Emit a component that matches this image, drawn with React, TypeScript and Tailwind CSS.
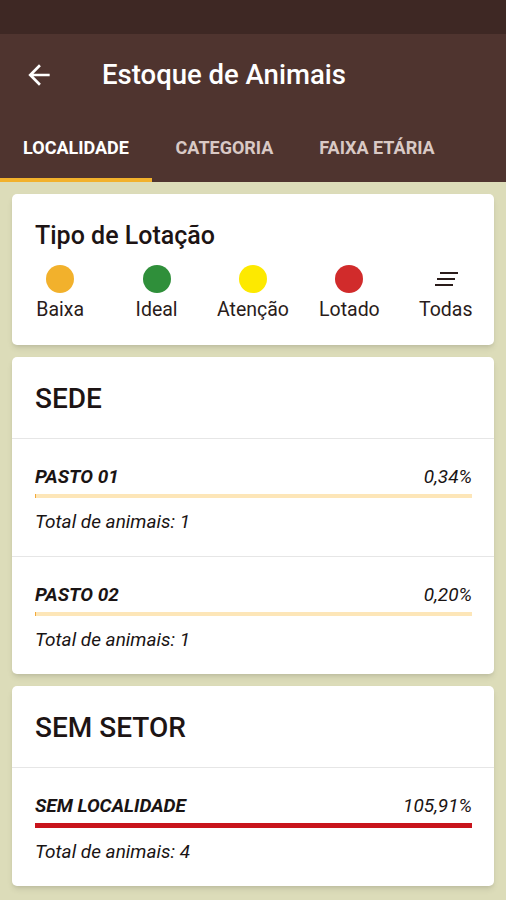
import React from 'react';

const font = { fontFamily: 'Roboto, "Liberation Sans", sans-serif' };

const levels = [
  { label: 'Baixa', color: 'bg-[#f2b12c]' },
  { label: 'Ideal', color: 'bg-[#2f8f3a]' },
  { label: 'Atenção', color: 'bg-[#fde900]' },
  { label: 'Lotado', color: 'bg-[#d12b2b]' },
];

type Row = { name: string; pct: string; total: number; fill: number; bar: string; track: string; thick: string };

const sectors: { title: string; rows: Row[] }[] = [
  {
    title: 'SEDE',
    rows: [
      { name: 'PASTO 01', pct: '0,34%', total: 1, fill: 0.34, bar: 'bg-[#f3a93a]', track: 'bg-[#fde6b8]', thick: 'h-[4px]' },
      { name: 'PASTO 02', pct: '0,20%', total: 1, fill: 0.2, bar: 'bg-[#f3a93a]', track: 'bg-[#fde6b8]', thick: 'h-[4px]' },
    ],
  },
  {
    title: 'SEM SETOR',
    rows: [
      { name: 'SEM LOCALIDADE', pct: '105,91%', total: 4, fill: 100, bar: 'bg-[#c8141c]', track: 'bg-[#f5c6c6]', thick: 'h-[5px]' },
    ],
  },
];

// three slanted lines, the "all" filter
function AllIcon() {
  return (
    <svg width="28" height="28" viewBox="0 0 28 28" className="text-[#2a1c1a]">
      <rect x="8" y="7" width="18" height="2" fill="currentColor" />
      <rect x="5" y="13" width="18" height="2" fill="currentColor" />
      <rect x="3" y="19" width="18" height="2" fill="currentColor" />
    </svg>
  );
}

export default function App() {
  return (
    <div className="h-[900px] w-[506px] overflow-hidden bg-[#dcdcb9]" style={font}>
      <div className="h-[34px] bg-[#3e2824]" />
      <div className="bg-[#4f342f]">
        <div className="flex h-[82px] items-center">
          <svg className="ml-[23px]" width="32" height="32" viewBox="0 0 24 24" fill="#fff">
            <path d="M20 11H7.83l5.59-5.59L12 4l-8 8 8 8 1.41-1.41L7.83 13H20v-2z" />
          </svg>
          <h1 className="ml-[47px] text-[27.5px] font-medium text-white">Estoque de Animais</h1>
        </div>
        <div className="flex h-[66px]">
          <div className="flex w-[152px] flex-col">
            <div className="flex flex-1 items-center justify-center text-[18px] font-bold text-white">LOCALIDADE</div>
            <div className="h-[4px] bg-[#f2b12c]" />
          </div>
          <div className="flex w-[145px] items-center justify-center pb-[4px] text-[18px] font-bold text-[#d9c9c5]">CATEGORIA</div>
          <div className="flex w-[160px] items-center justify-center pb-[4px] text-[18px] font-bold text-[#d9c9c5]">FAIXA ETÁRIA</div>
        </div>
      </div>

      <div className="flex flex-col gap-[12px] px-[12px] pt-[12px]">
        <div className="rounded-[5px] bg-white pb-[24px] pt-[28px] shadow-md">
          <h2 className="px-[23px] text-[25px] font-medium leading-[28px] text-[#1d1414]">Tipo de Lotação</h2>
          <div className="mt-[15px] grid grid-cols-5">
            {levels.map((l) => (
              <div key={l.label} className="flex flex-col items-center">
                <div className={`h-[28px] w-[28px] rounded-full ${l.color}`} />
                <span className="mt-[6px] text-[19.5px] leading-[22px] text-[#2a1c1a]">{l.label}</span>
              </div>
            ))}
            <div className="flex flex-col items-center">
              <AllIcon />
              <span className="mt-[6px] text-[19.5px] leading-[22px] text-[#2a1c1a]">Todas</span>
            </div>
          </div>
        </div>

        {sectors.map((s) => (
          <div key={s.title} className="rounded-[5px] bg-white shadow-md">
            <div className="flex h-[82px] items-center border-b border-[#e6e6e6] px-[23px] pt-[2px]">
              <h2 className="text-[28px] font-medium text-[#1d1414]">{s.title}</h2>
            </div>
            {s.rows.map((r, i) => (
              <div key={r.name} className={`pb-[23px] pl-[23px] pr-[22px] pt-[27px] ${i > 0 ? 'border-t border-[#e6e6e6]' : ''}`}>
                <div className="flex items-center justify-between text-[19px] leading-[22px] text-[#1a1414]">
                  <span className="font-bold italic">{r.name}</span>
                  <span className="italic">{r.pct}</span>
                </div>
                <div className={`mt-[6px] w-full ${r.thick} ${r.track}`}>
                  <div className={`h-full ${r.bar}`} style={{ width: `${Math.min(r.fill, 100)}%` }} />
                </div>
                <div className="mt-[13px] text-[19px] italic leading-[22px] text-[#1a1414]">Total de animais: {r.total}</div>
              </div>
            ))}
          </div>
        ))}
      </div>
    </div>
  );
}
